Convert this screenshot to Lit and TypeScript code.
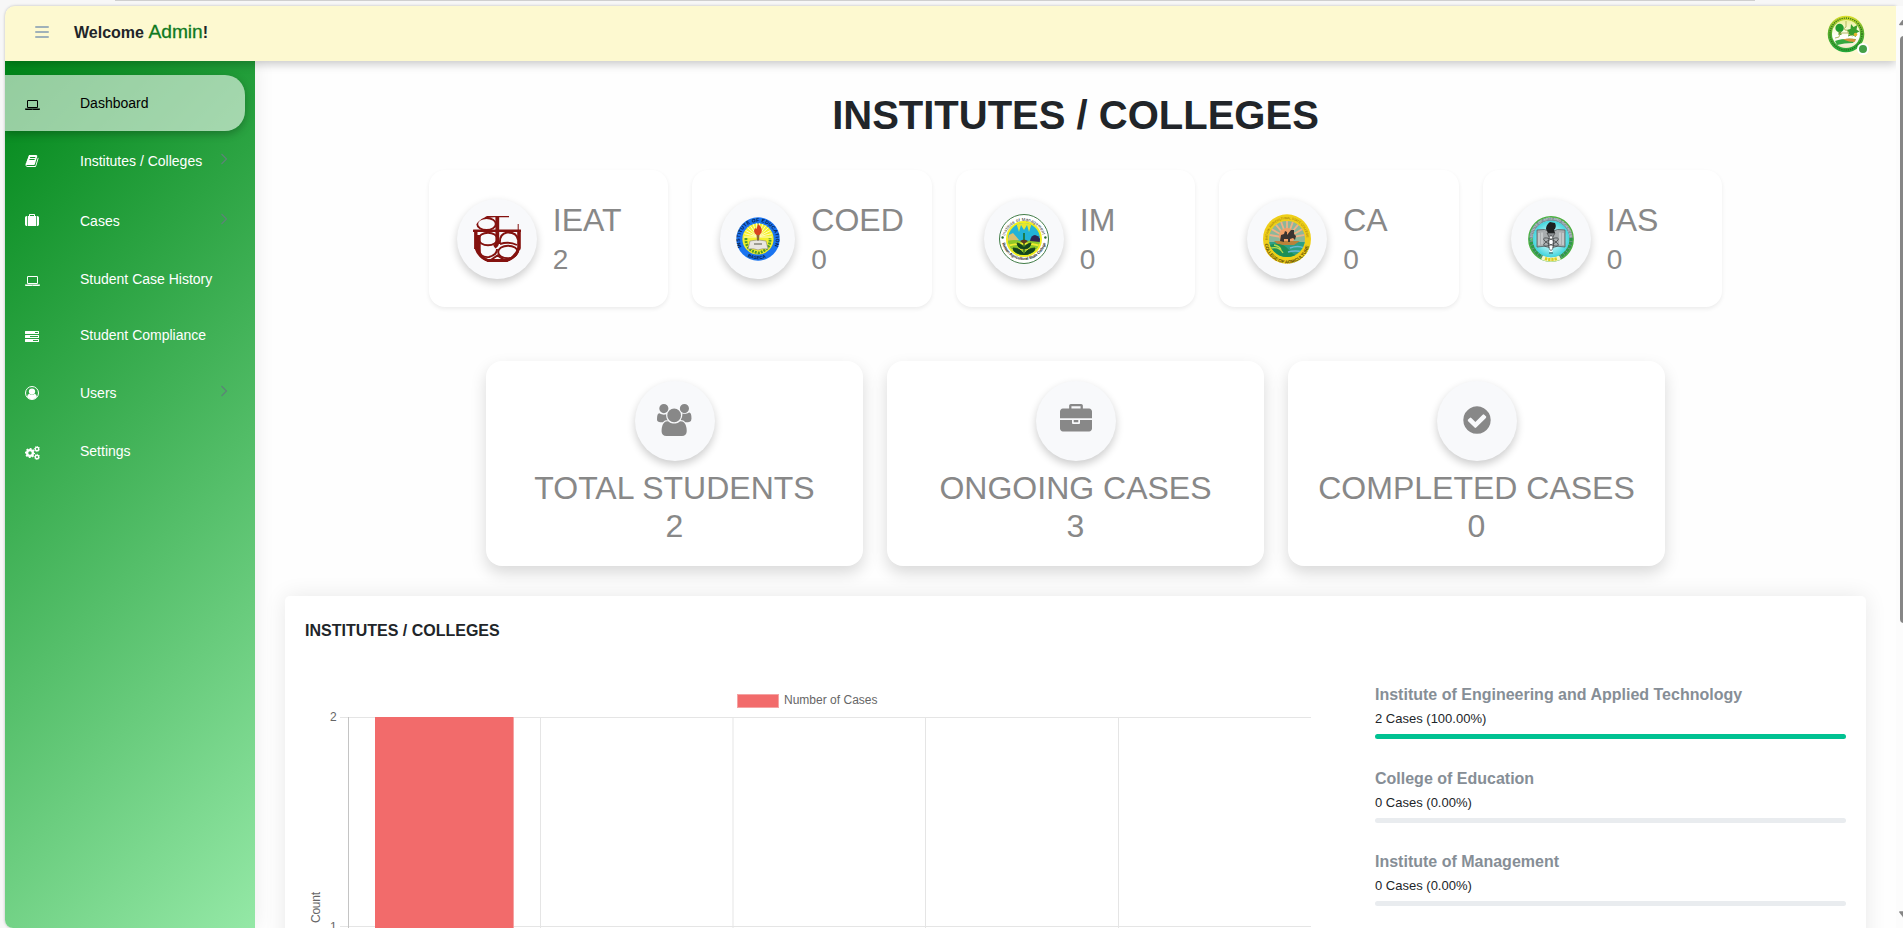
import { LitElement, html, css, svg, TemplateResult } from "lit";
import { customElement, property } from "lit/decorators.js";
import { classMap } from "lit/directives/class-map.js";

/* ---------- icons ---------- */
const gear = (cx: number, cy: number, r: number) => {
  const mid = r * 0.86;
  const step = (2 * Math.PI * mid) / 16;
  return svg`
    <circle cx=${cx} cy=${cy} r=${r * 0.57} fill="none" stroke="currentColor" stroke-width=${r * 0.46}></circle>
    <circle cx=${cx} cy=${cy} r=${mid} fill="none" stroke="currentColor" stroke-width=${r * 0.28}
      stroke-dasharray="${step * 1.1} ${step * 0.9}" stroke-dashoffset=${step / 2}></circle>`;
};

const ICONS: Record<string, { w: number; body: TemplateResult }> = {
  laptop: {
    w: 1920,
    body: svg`<path fill-rule="evenodd" d="M416 1280q-66 0-113-47t-47-113V416q0-66 47-113t113-47h1088q66 0 113 47t47 113v704q0 66-47 113t-113 47H416zm-32-864v704q0 13 9.5 22.5t22.5 9.5h1088q13 0 22.5-9.5t9.5-22.5V416q0-13-9.5-22.5T1504 384H416q-13 0-22.5 9.5T384 416zm1376 928h160v96q0 40-47 68t-113 28H160q-66 0-113-28t-47-68v-96h1760zm-720 96q16 0 16-16t-16-16h-160q-16 0-16 16t16 16h160z"></path>`,
  },
  book: {
    w: 1792,
    body: svg`<path d="M1703 478q40 57 18 129l-275 906q-19 64-76.5 107.5T1247 1664H324q-77 0-148.5-53.5T76 1479q-24-67-2-127 0-4 3-27t4-37q1-8-3-21.5t-3-19.5q2-11 8-21t16.5-23.5T116 1179q23-38 45-91.5t30-91.5q3-10 .5-30t-.5-28q3-11 17-28t17-23q21-36 42-92t25-90q1-9-2.5-32t.5-28q4-13 22-30.5t22-22.5q19-26 42.5-84.500T404 411q1-8-3-25.500t-2-26.500q2-8 9-18t18-23 17-21q8-12 16.500-30.500t15-35 16-36 19.500-32 26.500-23.500 36-11.500T620 134l-1 3q38-9 51-9h761q74 0 114 56t18 130l-274 906q-36 119-71.500 153.500T1089 1408H220q-27 0-38 15-11 16-1 43 24 70 144 70h923q29 0 56-15.500t35-41.500l300-987q7-22 5-57 38 15 59 43zm-1064 2q-4 13 2 22.500t20 9.500h608q13 0 25.500-9.500T1311 480l21-64q4-13-2-22.500t-20-9.500H702q-13 0-25.500 9.500T660 416zm-83 256q-4 13 2 22.500t20 9.500h608q13 0 25.500-9.500T1228 736l21-64q4-13-2-22.500t-20-9.500H619q-13 0-25.500 9.500T577 672z"></path>`,
  },
  suitcase: {
    w: 1792,
    body: svg`<path d="M640 256h512V128H640v128zM288 256v1280h-64q-92 0-158-66T0 1312V480q0-92 66-158t158-66h64zm1120 0v1280H384V256h128V96q0-40 28-68t68-28h576q40 0 68 28t28 68v160h128zm384 224v832q0 92-66 158t-158 66h-64V256h64q92 0 158 66t66 158z" fill-rule="evenodd"></path>`,
  },
  tasks: {
    w: 1792,
    body: svg`<path fill-rule="evenodd" d="M64 128h1664q64 0 64 64v256q0 64-64 64H64q-64 0-64-64V192q0-64 64-64zM1280 256v128h384V256zM64 640h1664q64 0 64 64v256q0 64-64 64H64q-64 0-64-64V704q0-64 64-64zM640 768v128h1024V768zM64 1152h1664q64 0 64 64v256q0 64-64 64H64q-64 0-64-64v-256q0-64 64-64zM1024 1280v128h640v-128z"></path>`,
  },
  user: {
    w: 1792,
    body: svg`<circle cx="896" cy="896" r="832" fill="none" stroke="currentColor" stroke-width="128"></circle>
      <circle cx="896" cy="704" r="400"></circle>
      <path d="M270 1400q20-360 290-410 130 150 336 150t336-150q270 50 290 410-260 280-626 280t-626-280z"></path>`,
  },
  cogs: {
    w: 1920,
    body: svg`${gear(640, 896, 650)}${gear(1536, 380, 390)}${gear(1536, 1400, 390)}`,
  },
  users: {
    w: 1920,
    body: svg`<path d="M593 896q-162 5-265 128h-134q-82 0-138-40.5t-56-118.5q0-353 124-353 6 0 43.5 21t97.5 42.5 119 21.5q67 0 133-23-5 37-5 66 0 159 93 293zm1071 637q0 120-73 189.5t-194 69.5h-874q-121 0-194-69.5t-73-189.5q0-53 3.5-103.5t14-109 26.5-108.5 43-97.5 62-81 85.5-53.5 111.5-20q10 0 43 21.5t73 48 107 48 135 21.5 135-21.5 107-48 73-48 43-21.5q61 0 111.5 20t85.5 53.5 62 81 43 97.5 26.5 108.5 14 109 3.5 103.5zm-1024-1277q0 106-75 181t-181 75-181-75-75-181 75-181 181-75 181 75 75 181zm704 384q0 159-112.5 271.5t-271.5 112.5-271.5-112.5-112.5-271.5 112.5-271.5 271.5-112.5 271.5 112.5 112.5 271.5zm576 225q0 78-56 118.5t-138 40.5h-134q-103-123-265-128 93-134 93-293 0-29-5-66 66 23 133 23 59 0 119-21.5t97.5-42.5 43.5-21q124 0 124 353zm-128-609q0 106-75 181t-181 75-181-75-75-181 75-181 181-75 181 75 75 181z"></path>`,
  },
  briefcase: {
    w: 1792,
    body: svg`<path d="M640 256h512v-128h-512v128zm1152 640v480q0 66-47 113t-113 47h-1472q-66 0-113-47t-47-113v-480h672v160q0 26 19 45t45 19h320q26 0 45-19t19-45v-160h672zm-768 0v128h-256v-128h256zm768-480v384h-1792v-384q0-66 47-113t113-47h352v-160q0-40 28-68t68-28h576q40 0 68 28t28 68v160h352q66 0 113 47t47 113z"></path>`,
  },
  check: {
    w: 1792,
    body: svg`<path d="M1412 734q0-28-18-46l-91-90q-19-19-45-19t-45 19l-408 407-226-226q-19-19-45-19t-45 19l-91 90q-18 18-18 46 0 27 18 45l362 362q19 19 45 19 27 0 46-19l543-543q18-18 18-45zm252 162q0 209-103 385.5t-279.5 279.5-385.5 103-385.5-103-279.5-279.5-103-385.5 103-385.5 279.5-279.5 385.5-103 385.5 103 279.5 279.5 103 385.5z"></path>`,
  },
};

const icon = (name: string, size: number) => {
  const { w, body } = ICONS[name];
  return html`<svg width=${(w / 1792) * size} height=${size} viewBox="0 0 ${w} 1792" fill="currentColor">${body}</svg>`;
};

/* ---------- college seals ---------- */
const rays = (cx: number, cy: number, r: number, n: number, from: number, to: number) =>
  Array.from({ length: n }, (_, i) => {
    const a = ((from + ((to - from) * i) / (n - 1)) * Math.PI) / 180;
    return `M${cx} ${cy}L${cx + r * Math.cos(a)} ${cy + r * Math.sin(a)}`;
  }).join("");

const SEALS: Record<string, TemplateResult> = {
  IEAT: html`<svg width="48" height="48" viewBox="0 0 48 48">
    <defs><clipPath id="ieat-clip"><path d="M14 1h22q12 6 12 14v18q-3 10-14 14.500H15Q3 43 0 33V15Q3 6 14 1z"></path></clipPath></defs>
    <g fill="none" stroke="#84120f" stroke-width="1.900" clip-path="url(#ieat-clip)">
      <path d="M12 2.500q3-1.300 9-1.500h15" stroke-width="2.600"></path>
      <path d="M24.300 1v26q0 3-3 5" stroke-width="3.800"></path>
      <path d="M0 15.800h48" stroke-width="2.600"></path>
      <path d="M45.200 9v7" stroke-width="1"></path>
      <path d="M2.800 15v19M6 20v18" stroke-width="3.400"></path>
      <path d="M46 15v20" stroke-width="3.600"></path>
      <path d="M3 33q3 9 12 12.600h19q9-3.600 12-12.600" stroke-width="3"></path>
      <ellipse cx="13.500" cy="9" rx="9.300" ry="6"></ellipse>
      <ellipse cx="15" cy="24" rx="9.300" ry="6.300"></ellipse>
      <path d="M27 29q-1-10 7-11.500 10-.5 11 7.500M27 29q9-3 17 1"></path>
      <ellipse cx="35" cy="37" rx="9.800" ry="6.300"></ellipse>
      <path d="M6 33q0 10 10 9 8-2 8-8M17 45.500l7.500-5 7.500 5"></path>
    </g>
  </svg>`,
  COED: html`<svg width="44" height="44" viewBox="0 0 44 44">
    <defs>
      <path id="edu-top" d="M5.500 30A18 18 0 1 1 38.500 30"></path>
      <path id="edu-bot" d="M10 38.300A20.500 20.500 0 0 0 34 38.300"></path>
    </defs>
    <circle cx="22" cy="22" r="21.700" fill="#1a74f0"></circle>
    <circle cx="22" cy="22" r="15.600" fill="#f4f12c"></circle>
    <path d=${rays(22, 20, 14, 14, 180, 360)} stroke="#fffbc0" stroke-width="1"></path>
    <path d="M10 21q-1 12 12 15 13-3 12-15" fill="none" stroke="#4d9a2c" stroke-width="2.800" stroke-dasharray="2 1"></path>
    <path d="M22 7q5 4 3.500 8.500l-2 2.500h-3q-4-3-1.500-7l1.500 1z" fill="#d9441f"></path>
    <path d="M20.500 18h3l-.8 8h-1.400z" fill="#8c6a35"></path>
    <path d="M14 24l7-1 1 1 1-1 7 1 2 8q-6-1-10 1-4-2-10-1z" fill="#e9e6e0" stroke="#8c8878" stroke-width=".6"></path>
    <path d="M18 27h8" stroke="#554" stroke-width="1.200"></path>
    <text class="seal-text" font-size="5" font-weight="700" fill="#061a48"><textPath href="#edu-top" textLength="70">INSTITUTE OF EDUCATION</textPath></text>
    <text class="seal-text" font-size="4.500" font-weight="700" fill="#061a48"><textPath href="#edu-bot" startOffset="2">BASECA</textPath></text>
  </svg>`,
  IM: html`<svg width="50" height="50" viewBox="0 0 50 50">
    <defs>
      <path id="im-top" d="M6 22A19.500 19.500 0 0 1 44 22"></path>
      <path id="im-bot" d="M3.200 29A22.500 22.500 0 0 0 46.800 29"></path>
      <clipPath id="im-clip"><circle cx="25" cy="25" r="16"></circle></clipPath>
    </defs>
    <circle cx="25" cy="25" r="24.500" fill="#fff" stroke="#2c6e33" stroke-width=".9"></circle>
    <circle cx="25" cy="25" r="18" fill="#f2ee1c"></circle>
    <g clip-path="url(#im-clip)">
      <path d="M5 5h40v40H5z" fill="#22b3d8"></path>
      <path d="M16 5l4 13 2-7 3 5 3-5 2 7 4-13z" fill="#e8e62e"></path>
      <path d="M8 28l2-7 4-2 6 7z" fill="#d9c070"></path>
      <path d="M5 28q10-4 20 0 10-4 20 0v17H5z" fill="#8ec82a"></path>
      <path d="M31 27q1-6 5-6 5 1 6 7z" fill="#2e2554"></path>
      <path d="M5 33q20-7 40 0M8 38q17-6 34 0" fill="none" stroke="#f0ea30" stroke-width="1.800"></path>
      <path d="M25 27v15M25 41q-10 1-11-7 8 0 11 7 10 1 11-7-8 0-11 7M25 35q-6 0-7-6 6 1 7 6 6 0 7-6-6 1-7 6" fill="#14451d" stroke="#14451d" stroke-width="1"></path>
      <path d="M21 27q4-3 8 0l-4 3z" fill="#5a3b20"></path>
      <path d="M25 26v-7" stroke="#1b6e2a" stroke-width="1.600"></path>
    </g>
    <circle cx="3.600" cy="23.500" r="1.200" fill="#2c6e33"></circle>
    <circle cx="46.400" cy="23.500" r="1.200" fill="#2c6e33"></circle>
    <text class="seal-text" font-size="4.400" fill="#222"><textPath href="#im-top" textLength="51">Institute of Management</textPath></text>
    <text class="seal-text" font-size="4" font-weight="700" fill="#222"><textPath href="#im-bot" textLength="59">Bataan Agricultural State College</textPath></text>
  </svg>`,
  CA: html`<svg width="50" height="50" viewBox="0 0 50 50">
    <defs>
      <path id="ca-top" d="M5.800 28A19.500 19.500 0 1 1 44.200 28"></path>
      <path id="ca-bot" d="M2.500 27A22.500 22.500 0 0 0 47.500 27"></path>
      <clipPath id="ca-clip"><circle cx="25" cy="25" r="18"></circle></clipPath>
    </defs>
    <ellipse cx="25" cy="25" rx="24" ry="24.700" fill="#efcf18"></ellipse>
    <g clip-path="url(#ca-clip)">
      <path d="M5 5h40v25H5z" fill="#8db79a"></path>
      <path d=${rays(25, 24, 20, 9, 190, 350)} stroke="#eeb087" stroke-width="1.800"></path>
      <circle cx="25" cy="22" r="8" fill="#f0a068"></circle>
      <path d="M5 28h40v17H5z" fill="#2d9f85"></path>
      <path d="M12 27h26l-6 4H16z" fill="#b9813a"></path>
      <path d="M5 32q14-6 22 4t18 2v7H5z" fill="#1c8f56"></path>
      <path d="M9 34q8-2 12 5M12 31q6 1 7 5" stroke="#b5dc4b" stroke-width="1.300" fill="none"></path>
      <path d="M28 34q8-3 14 0M26 38q8-2 14 0" stroke="#67b7d6" stroke-width="1.500" fill="none"></path>
      <path d="M18 27l1-6 3-1 1-3 2 1v3l4-5h3v4l2 2-1 4-2-2-3 1v3h-2v-3h-4v3z" fill="#3a3431"></path>
    </g>
    <text class="seal-text" font-size="3.200" fill="#8a6a10"><textPath href="#ca-top" startOffset="2" textLength="61">BATAAN AGRICULTURAL STATE COLLEGE</textPath></text>
    <text class="seal-text" font-size="4.600" font-weight="700" fill="#5b4708"><textPath href="#ca-bot" startOffset="3" textLength="62">COLLEGE OF AGRICULTURE</textPath></text>
  </svg>`,
  IAS: html`<svg width="46" height="46" viewBox="0 0 46 46">
    <defs>
      <path id="ias-top" d="M4.500 25A18.700 18.700 0 1 1 41.500 25"></path>
      <radialGradient id="ias-bg"><stop offset=".2" stop-color="#e9fdff"></stop><stop offset="1" stop-color="#3fd5dc"></stop></radialGradient>
    </defs>
    <circle cx="23" cy="23" r="20" fill="none" stroke="#7d8f98" stroke-width="4"></circle>
    <circle cx="23" cy="23" r="22.200" fill="none" stroke="#49b03f" stroke-width="1.400"></circle>
    <path d="M3 22q0 12 11 19M43 22q0 12-11 19" fill="none" stroke="#2f9a48" stroke-width="3.500" stroke-dasharray="3 .7"></path>
    <path d="M14 41.500q9 4 18 0" fill="none" stroke="#f4f6c8" stroke-width="4.500"></path>
    <path d="M17 42.500q6 2 12.500 0" fill="none" stroke="#d8cf1e" stroke-width="3" stroke-dasharray="2.400 .8"></path>
    <circle cx="23" cy="23" r="18.300" fill="url(#ias-bg)"></circle>
    <path d="M9 14q8-2 14 2 6-4 14-2v17q-8-2-14 1-6-3-14-1z" fill="#a9adaf" stroke="#55595b" stroke-width=".8"></path>
    <path d="M11 17v12M14 16.500v12M32 16.500v12M35 17v12" stroke="#dfe2e3" stroke-width="1"></path>
    <path d="M18 13q0-4 4-7l5 1q2 4-1 7l1 3h-7z" fill="#1d2021"></path>
    <path d="M19 17h8l-2 4h-4z" fill="#8b8f92" stroke="#333" stroke-width=".6"></path>
    <path d="M21.500 20h3v16h-3z" fill="#fff"></path>
    <g fill="none" stroke="#3d4143" stroke-width=".7">
      <ellipse cx="23" cy="26" rx="8" ry="2.600" transform="rotate(25 23 26)"></ellipse>
      <ellipse cx="23" cy="26" rx="8" ry="2.600" transform="rotate(-25 23 26)"></ellipse>
      <ellipse cx="23" cy="27" rx="2.600" ry="7.500"></ellipse>
    </g>
    <path d="M21 37h4" stroke="#355" stroke-width="1"></path>
    <text class="seal-text" font-size="3.200" fill="#e2e8ea"><textPath href="#ias-top" textLength="60">INSTITUTE OF ARTS AND SCIENCES</textPath></text>
  </svg>`,
};

const avatarSeal = html`<svg width="38" height="38" viewBox="0 0 38 38">
  <defs>
    <linearGradient id="av-ring" x1="0" y1="0" x2="0" y2="1">
      <stop offset="0" stop-color="#e0e02e"></stop><stop offset=".4" stop-color="#5fb02c"></stop><stop offset="1" stop-color="#22a83c"></stop>
    </linearGradient>
    <linearGradient id="av-in" x1="0" y1="0" x2="0" y2="1">
      <stop offset="0" stop-color="#eef19a"></stop><stop offset=".6" stop-color="#fff"></stop><stop offset="1" stop-color="#f3e9c4"></stop>
    </linearGradient>
  </defs>
  <circle cx="19" cy="19" r="18.300" fill="url(#av-ring)"></circle>
  <circle cx="19" cy="19" r="16" fill="none" stroke="#2c6a18" stroke-width="1.300" stroke-dasharray="1.100 1.100"></circle>
  <circle cx="19" cy="19" r="14" fill="url(#av-in)"></circle>
  <ellipse cx="12.600" cy="13" rx="4.200" ry="4.300" fill="#219a2e"></ellipse>
  <path d="M11.500 16h2.500l.5 4h-3z" fill="#5a9a35"></path>
  <path d="M24 9l2.500 3 4-2-1 4.500 3 2-4 2 .5 3.500-4-2-4 1.500 1-3.500-2.500-3 4-1z" fill="#3a9e2c"></path>
  <circle cx="28.500" cy="19.500" r="1.800" fill="#e4b52c"></circle>
  <path d="M19 6v6q-3 1-1 3 4 0 3 3h-6q-3 0-3 4l-4 1M21 18q2 3 5 3" fill="none" stroke="#a9b255" stroke-width=".9"></path>
  <path d="M8 26q8-3 21-2l-3 4q-9 0-16 2z" fill="#35a83e"></path>
  <path d="M16 24.500q6-2 13 0l-1.500 2.500q-5 0-11.500-2.500z" fill="#d8933a"></path>
</svg>`;

/* ---------- data ---------- */
interface MenuEntry { label: string; icon: string; active?: boolean; nested?: boolean; }
const MENU: MenuEntry[] = [
  { label: "Dashboard", icon: "laptop", active: true },
  { label: "Institutes / Colleges", icon: "book", nested: true },
  { label: "Cases", icon: "suitcase", nested: true },
  { label: "Student Case History", icon: "laptop" },
  { label: "Student Compliance", icon: "tasks" },
  { label: "Users", icon: "user", nested: true },
  { label: "Settings", icon: "cogs" },
];
const COLLEGES = [["IEAT", 2], ["COED", 0], ["IM", 0], ["CA", 0], ["IAS", 0]] as [string, number][];
const TOTALS = [["TOTAL STUDENTS", 2, "users"], ["ONGOING CASES", 3, "briefcase"], ["COMPLETED CASES", 0, "check"]] as [string, number, string][];
const PROGRESS = [
  ["Institute of Engineering and Applied Technology", 2, 100],
  ["College of Education", 0, 0],
  ["Institute of Management", 0, 0],
] as [string, number, number][];

/* ---------- elements ---------- */
@customElement("side-menu")
class SideMenu extends LitElement {
  @property({ attribute: false }) items: MenuEntry[] = MENU;
  static styles = css`
    * { box-sizing: border-box; }
    :host { display: block; }
    .item { display: flex; align-items: center; height: 56px; padding-left: 20px; color: #fff; font-size: 14px; }
    .nested { height: 60px; }
    .active { color: #000; background: rgba(255, 255, 255, .58); border-radius: 0 20px 20px 0; margin-right: 10px;
      box-shadow: 0 3px 8px rgba(0, 0, 0, .26); }
    .glyph { display: flex; width: 55px; padding-top: 4px; }
    .nested .glyph { padding-top: 0; }
    .label { flex: 1; line-height: 20px; }
    .chev { margin: 0 27px 5px 0; stroke: #5b8577; fill: none; }
  `;
  render() {
    return html`${this.items.map((m) => html`
      <div class=${classMap({ item: true, active: !!m.active, nested: !!m.nested })}>
        <span class="glyph">${icon(m.icon, 14)}</span>
        <span class="label">${m.label}</span>
        ${m.nested ? html`<svg class="chev" width="8" height="12" viewBox="0 0 8 12"><path d="M1.500 1l5 5-5 5" stroke-width="1.200"></path></svg>` : ""}
      </div>`)}`;
  }
}

@customElement("case-chart")
class CaseChart extends LitElement {
  static styles = css`
    :host { display: block; }
    svg { display: block; }
    text { font: 12px "Liberation Sans", Arial, sans-serif; fill: #666; }
  `;
  render() {
    const cols = [235.5, 428, 620.5, 813.5];
    return html`<svg width="1010" height="240" viewBox="0 0 1010 240">
      <rect x="432.500" y="4.500" width="41" height="13" fill="#f26b6b" stroke="#f5a3a3"></rect>
      <text x="479" y="14" textLength="93.500" lengthAdjust="spacing">Number of Cases</text>
      <text x="25" y="31">2</text>
      <text x="25" y="241">1</text>
      <text transform="translate(15 233) rotate(-90)" textLength="31">Count</text>
      <path d="M35 27.500H1006M35 236.500H1006" stroke="#e5e5e5"></path>
      <path d=${cols.map((x) => `M${x} 27V240`).join("")} stroke="#e5e5e5"></path>
      <path d="M43.500 27V240" stroke="#c4c4c4"></path>
      <rect x="70" y="27" width="139" height="213" fill="#f26b6b"></rect>
      <rect x="208" y="27" width="1" height="213" fill="#f5a3a3"></rect>
    </svg>`;
  }
}

@customElement("app-root")
class AppRoot extends LitElement {
  static styles = css`
    * { box-sizing: border-box; }
    :host { display: block; width: 1903px; height: 928px; overflow: hidden; background: #f7f7f7;
      font-family: "Liberation Sans", Arial, sans-serif; color: #212529; }
    .browser { display: grid; grid-template: 6px 922px / 5px 1891px 7px; }
    .edge { grid-column: 1 / 4; padding: 0 148px 0 115px; }
    .edge-line { height: 1px; background: #cfcfcf; }
    .page { grid-column: 2; display: flex; flex-direction: column; height: 922px; background: #fefefe;
      border-radius: 10px 0 0 8px; overflow: hidden; box-shadow: 0 0 3px rgba(0, 0, 0, .25); }
    .rail { background: #fcfcfc; display: flex; flex-direction: column; padding-left: 3px; overflow: hidden; color: #858585; }
    .rail svg { flex: none; }
    .thumb { width: 8px; height: 587px; margin: 10px 0 288px 1px; flex: none; background: #868686; border-radius: 4px; }
    .up { margin-top: 12px; }

    .topbar { flex: none; height: 55px; display: flex; align-items: center; padding: 0 30px; background: #fdf9d0;
      box-shadow: 0 3px 9px rgba(0, 0, 0, .22); position: relative; z-index: 2; }
    .burger { display: grid; gap: 2.500px; width: 14px; margin: -3px 25px 0 0; }
    .burger i { height: 2.500px; border-radius: 1px; background: #9fb1b9; }
    .welcome { flex: 1; font-size: 16px; font-weight: 700; line-height: 24px; margin-top: -3px; }
    .name { font-size: 19.200px; font-weight: 400; color: #0f7a1f; -webkit-text-stroke: .3px #0f7a1f; }
    .avatar { position: relative; width: 38px; height: 38px; margin: 1px 1px 0 0; }
    .avatar svg { display: block; }
    .online { position: absolute; right: -4px; bottom: -2px; width: 12px; height: 12px; border-radius: 50%;
      background: #43a047; border: 2px solid #fff; }

    .body { flex: 1; display: flex; min-height: 0; }
    .side { flex: none; width: 250px; padding-top: 14px; background: linear-gradient(135deg, #008719 0%, #94e8a6 100%);
      box-shadow: 0 0 20px rgba(0, 0, 0, .08); position: relative; z-index: 1; }
    .main { flex: 1; padding: 32px 30px 0; display: flex; flex-direction: column; }
    h1 { margin: 0; font-size: 40px; line-height: 44px; text-align: center; }

    .colleges { display: grid; grid-template-columns: repeat(5, 1fr); gap: 24px; width: 1293.500px; margin: 33px auto 0; }
    .college { display: flex; align-items: center; gap: 16px; height: 137px; padding: 0 28px; border-radius: 16px;
      background: #fff; box-shadow: 0 2px 4px rgba(0, 0, 0, .075); color: #888; min-width: 0; }
    .disc { width: 80px; height: 80px; border-radius: 50%; background: #f8f9fb; display: flex; align-items: center;
      justify-content: center; box-shadow: 0 4px 8px rgba(0, 0, 0, .2); color: #888; }
    .college .disc { flex: 0 1 80px; }
    .disc svg { flex: none; display: block; }
    .figures { padding-bottom: 2px; }
    .code { font-size: 32px; line-height: 44px; }
    .num { font-size: 28px; line-height: 36px; }
    .seal-text { font-family: "Liberation Sans", Arial, sans-serif; }

    .totals { display: grid; grid-template-columns: repeat(3, 377px); gap: 24px; margin: 54px auto 0; }
    .total { height: 205px; padding-top: 20px; border-radius: 16px; background: #fff; display: flex; flex-direction: column;
      align-items: center; box-shadow: 0 7px 16px rgba(0, 0, 0, .15); color: #888; font-size: 32px; line-height: 38px; white-space: nowrap; }
    .total .disc { margin-bottom: 8px; padding-bottom: 2px; }

    .panel { flex: none; height: 400px; margin-top: 30px; padding: 25px 20px; background: #fff; border-radius: 5px;
      box-shadow: 0 0 22px rgba(0, 0, 0, .09); }
    h2 { margin: 0; font-size: 16px; line-height: 20px; }
    .split { display: grid; grid-template-columns: 1010px 471px; column-gap: 60px; margin-top: 44px; }
    .split case-chart { padding-top: 5px; }
    .row { height: 83.500px; }
    .row-title { font-size: 16px; font-weight: 700; line-height: 20px; color: #868e96; }
    .row-sub { font-size: 13px; line-height: 20px; color: #212529; margin-top: 4px; }
    .track { height: 5px; margin-top: 5px; border-radius: 3px; background: #e9ecef; overflow: hidden; }
    .fill { height: 5px; background: #00c292; }
  `;

  render() {
    return html`<div class="browser">
      <div class="edge"><div class="edge-line"></div></div>
      <div class="page">
        <header class="topbar">
          <span class="burger"><i></i><i></i><i></i></span>
          <span class="welcome">Welcome <span class="name">Admin</span>!</span>
          <span class="avatar">${avatarSeal}<i class="online"></i></span>
        </header>
        <div class="body">
          <nav class="side"><side-menu></side-menu></nav>
          <main class="main">
            <h1>INSTITUTES / COLLEGES</h1>
            <section class="colleges">
              ${COLLEGES.map(([code, n]) => html`<div class="college">
                <div class="disc">${SEALS[code]}</div>
                <div class="figures"><div class="code">${code}</div><div class="num">${n}</div></div>
              </div>`)}
            </section>
            <section class="totals">
              ${TOTALS.map(([label, n, ic]) => html`<div class="total">
                <div class="disc">${icon(ic, 32)}</div><span>${label}</span><span>${n}</span>
              </div>`)}
            </section>
            <section class="panel">
              <h2>INSTITUTES / COLLEGES</h2>
              <div class="split">
                <case-chart></case-chart>
                <div>
                  ${PROGRESS.map(([name, n, pct]) => html`<div class="row">
                    <div class="row-title">${name}</div>
                    <div class="row-sub">${n} Cases (${pct.toFixed(2)}%)</div>
                    <div class="track"><div class="fill" style="width:${pct}%"></div></div>
                  </div>`)}
                </div>
              </div>
            </section>
          </main>
        </div>
      </div>
      <div class="rail">
        <svg class="up" width="10" height="8" viewBox="0 0 10 8"><path d="M5 0l5 6.500q0 .8-1 .8H1q-1 0-1-.8z" fill="currentColor"></path></svg>
        <div class="thumb"></div>
        <svg width="10" height="8" viewBox="0 0 10 8"><path d="M5 7.500L0 1q0-.8 1-.8h8q1 0 1 .8z" fill="currentColor"></path></svg>
      </div>
    </div>`;
  }
}
